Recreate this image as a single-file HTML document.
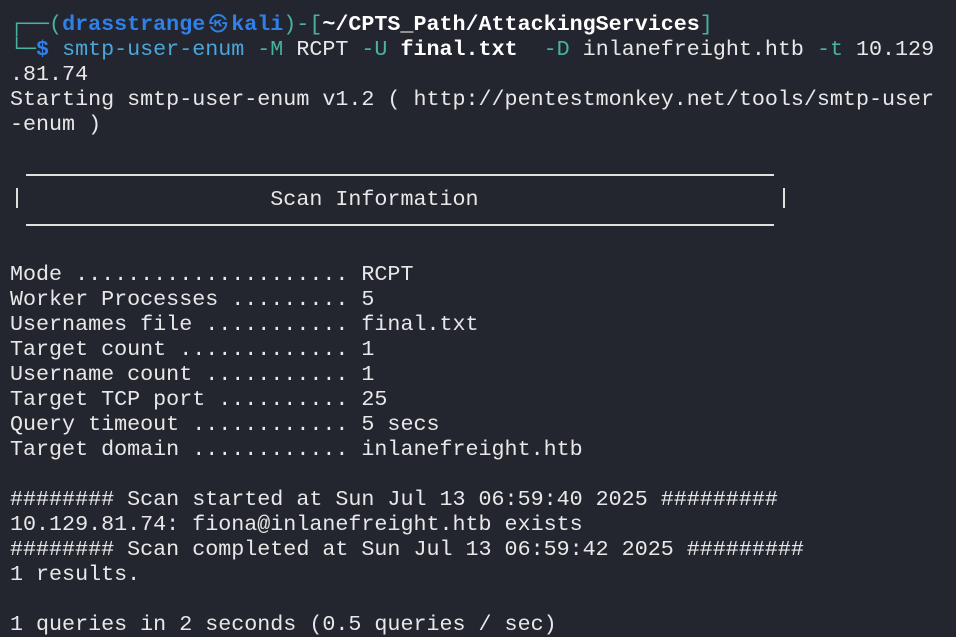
<!DOCTYPE html>
<html><head><meta charset="utf-8"><style>
html,body{margin:0;padding:0;background:#23262f;}
body{width:956px;height:636px;overflow:hidden;position:relative;}
pre{position:absolute;left:10px;top:12px;margin:0;font-family:"Liberation Mono","DejaVu Sans Mono",monospace;font-size:21.7px;line-height:25px;color:#e8e8e8;}
.t{color:#48b3a0}.b{color:#2f80e8;font-weight:bold}.c{color:#4aa6dc}.w{font-weight:bold;color:#fff}
.k{display:inline-block;width:26px;text-align:center;font-family:"DejaVu Sans","Noto Sans CJK JP",sans-serif;font-size:19px;color:#2f80e8}
.h{position:absolute;left:26px;width:748px;height:2px;background:#e0e0e0}
.v{position:absolute;top:188px;width:2px;height:20px;background:#e0e0e0}
</style></head><body>
<pre><span class="t">┌──(</span><span class="b">drasstrange<span class="k">㉿</span>kali</span><span class="t">)-[</span><span class="w">~/CPTS_Path/AttackingServices</span><span class="t">]</span>
<span class="t">└─</span><span class="b">$</span> <span class="c">smtp-user-enum</span> <span class="t">-M</span> RCPT <span class="t">-U</span> <span class="w">final.txt</span>  <span class="t">-D</span> inlanefreight.htb <span class="t">-t</span> 10.129
.81.74
Starting smtp-user-enum v1.2 ( http://pentestmonkey.net/tools/smtp-user
-enum )


                    Scan Information


Mode ..................... RCPT
Worker Processes ......... 5
Usernames file ........... final.txt
Target count ............. 1
Username count ........... 1
Target TCP port .......... 25
Query timeout ............ 5 secs
Target domain ............ inlanefreight.htb

######## Scan started at Sun Jul 13 06:59:40 2025 #########
10.129.81.74: fiona@inlanefreight.htb exists
######## Scan completed at Sun Jul 13 06:59:42 2025 #########
1 results.

1 queries in 2 seconds (0.5 queries / sec)</pre>
<div class="h" style="top:174px"></div>
<div class="h" style="top:224px"></div>
<div class="v" style="left:16px"></div>
<div class="v" style="left:783px"></div>
</body></html>
